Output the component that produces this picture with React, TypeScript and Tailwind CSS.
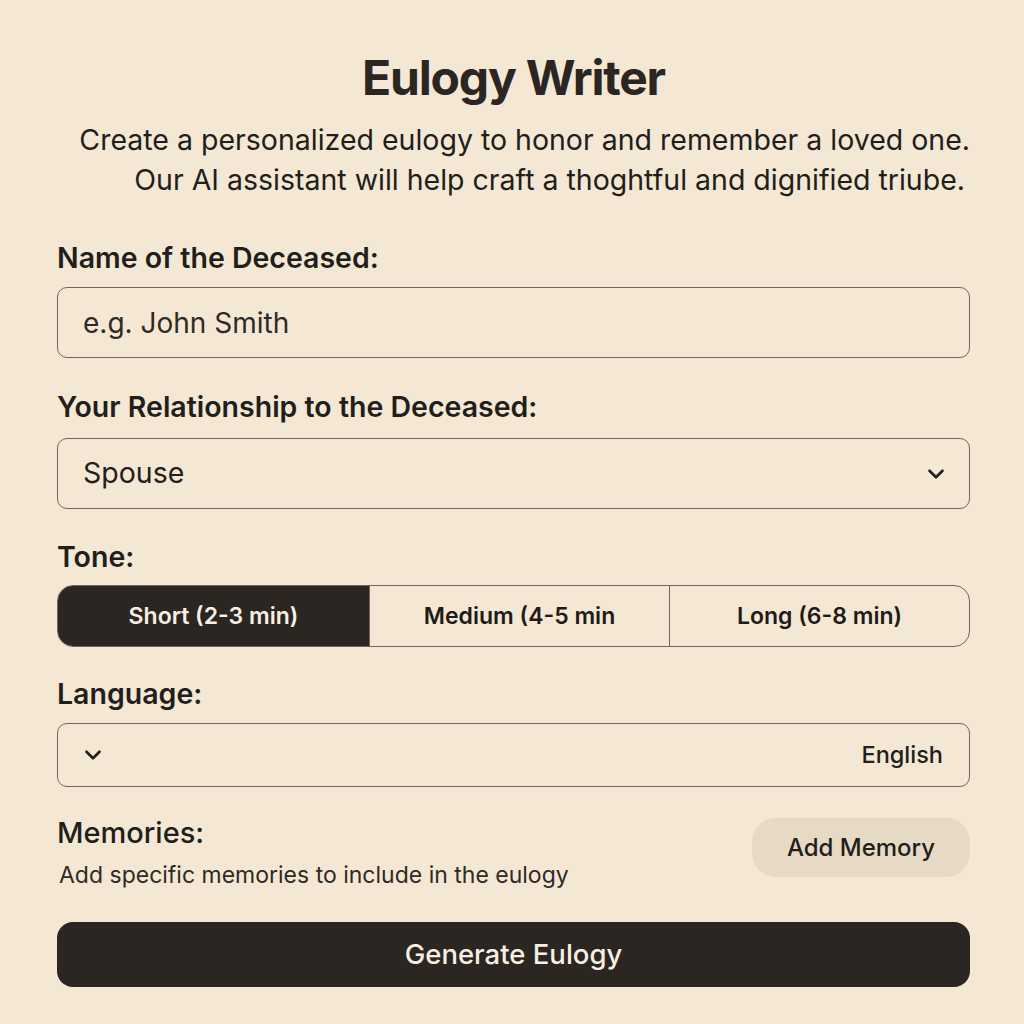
import { ChevronDown } from 'lucide-react'

const tones = ['Short (2-3 min)', 'Medium (4-5 min', 'Long (6-8 min)']

export default function App() {
  const active = 0

  return (
    <div className="min-h-screen bg-[#f4e8d4] text-[#221e1b] font-['Inter',sans-serif] pl-[57px] pr-[54px] pt-[52px]">
      {/* Header */}
      <h1 className="text-center text-[48px] font-bold leading-[52px] tracking-tight text-[#2b2622]">Eulogy Writer</h1>
      <p className="mt-[16px] text-right text-[28.5px] leading-[40px] text-[#221e1b]">
        <span className="inline-block">Create a personalized eulogy to honor and remember a loved one.</span>
        <br />
        <span className="inline-block mr-[5px]">Our AI assistant will help craft a thoghtful and dignified triube.</span>
      </p>

      {/* Name */}
      <label className="block mt-[41px] text-[28.5px] font-semibold leading-[34px]">Name of the Deceased:</label>
      <div className="mt-[12px] h-[71px] rounded-[10px] border border-[#6f665d] flex items-center px-[25px] text-[28px] text-[#2f2a26]">
        e.g. John Smith
      </div>

      {/* Relationship */}
      <label className="block mt-[32px] text-[28.5px] font-semibold leading-[34px]">Your Relationship to the Deceased:</label>
      <div className="mt-[14px] h-[71px] rounded-[10px] border border-[#6f665d] flex items-center justify-between pl-[25px] pr-[20px] text-[28.5px]">
        <span>Spouse</span>
        <ChevronDown size={26} strokeWidth={2.4} />
      </div>

      {/* Tone */}
      <label className="block mt-[31px] text-[28.5px] font-semibold leading-[34px]">Tone:</label>
      <div className="mt-[11px] h-[62px] rounded-[16px] border border-[#6f665d] grid grid-cols-[311px_300px_1fr] overflow-hidden">
        {tones.map((t, i) => (
          <div
            key={t}
            className={
              i === active
                ? 'flex items-center justify-center bg-[#2b2622] text-[#f7efe2] text-[23px] font-semibold'
                : 'flex items-center justify-center border-l border-[#6f665d] text-[23px] font-semibold text-[#1f1b18]'
            }
          >
            {t}
          </div>
        ))}
      </div>

      {/* Language */}
      <label className="block mt-[30px] text-[28.5px] font-semibold leading-[34px]">Language:</label>
      <div className="mt-[12px] h-[64px] rounded-[10px] border border-[#6f665d] flex items-center justify-between pl-[22px] pr-[26px] text-[23.5px] font-medium">
        <ChevronDown size={26} strokeWidth={2.4} />
        <span>English</span>
      </div>

      {/* Memories */}
      <div className="mt-[27px] flex items-start justify-between">
        <div>
          <div className="mt-[2px] text-[29px] font-medium leading-[34px]">Memories:</div>
          <div className="mt-[11px] pl-[2px] text-[23px] leading-[28px] text-[#2f2a26]">Add specific memories to include in the eulogy</div>
        </div>
        <button className="mt-[4px] h-[59px] w-[218px] rounded-[24px] bg-[#e6dac5] text-[24px] font-medium text-[#221e1b]">
          Add Memory
        </button>
      </div>

      <button className="mt-[33px] w-full h-[65px] rounded-[16px] bg-[#2b2622] text-[#f7efe2] text-[27.5px] font-medium">
        Generate Eulogy
      </button>
    </div>
  )
}
